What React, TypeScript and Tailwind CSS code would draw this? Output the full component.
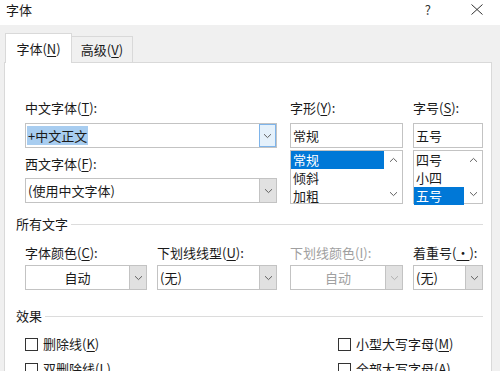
import React from "react";

function Chevron({ dir = "down", color = "#606060" }: { dir?: "down" | "up"; color?: string }) {
  return (
    <svg width="9" height="6" viewBox="0 0 9 6" fill="none">
      {dir === "down" ? (
        <path d="M1 1.2 L4.5 4.6 L8 1.2" stroke={color} strokeWidth="1" />
      ) : (
        <path d="M1 4.8 L4.5 1.4 L8 4.8" stroke={color} strokeWidth="1" />
      )}
    </svg>
  );
}

function Label({ text, k, disabled }: { text: string; k: string; disabled?: boolean }) {
  return (
    <div className={`h-[20px] leading-[20px] whitespace-nowrap ${disabled ? "text-[#a0a0a0]" : "text-[#1a1a1a]"}`}>
      {text}(<span className="underline underline-offset-2">{k}</span>):
    </div>
  );
}

function Combo({
  value,
  center,
  focused,
  disabled,
  highlight,
}: {
  value: string;
  center?: boolean;
  focused?: boolean;
  disabled?: boolean;
  highlight?: boolean;
}) {
  return (
    <div className="flex h-[25px] border border-[#c3c3c3] bg-white">
      <div className={`flex-1 flex items-center px-[1px] ${center ? "justify-center" : ""} ${disabled ? "text-[#a0a0a0]" : "text-[#1a1a1a]"}`}>
        {highlight ? (
          <span className="bg-[#a8cdf0] leading-[19px] px-[1px]">{value}</span>
        ) : (
          <span className="px-[1px]">{value}</span>
        )}
      </div>
      <div
        className={`w-[17px] flex items-center justify-center border-l ${
          focused ? "bg-[#e5f1fb] border-[#7eb4ea] border" : "bg-[#e1e1e1] border-[#c3c3c3]"
        }`}
      >
        <Chevron color={disabled ? "#b0b0b0" : "#606060"} />
      </div>
    </div>
  );
}

function ListBox({ items, selected }: { items: string[]; selected: number }) {
  return (
    <div className="flex h-[54px] border border-[#c3c3c3] bg-white">
      <div className="flex-1 flex flex-col">
        {items.map((it, i) => (
          <div
            key={it}
            className={`h-[18px] leading-[18px] px-[2px] ${i === selected ? "bg-[#0078d7] text-white" : "text-[#1a1a1a]"}`}
          >
            {it}
          </div>
        ))}
      </div>
      <div className="w-[18px] flex flex-col items-center justify-between py-[6px] bg-white">
        <Chevron dir="up" />
        <Chevron />
      </div>
    </div>
  );
}

function Section({ title }: { title: string }) {
  return (
    <div className="flex items-center h-[20px] ml-[11px] mr-[8px]">
      <span className="text-[#1a1a1a] whitespace-nowrap">{title}</span>
      <div className="flex-1 h-px bg-[#dcdcdc] ml-[3px]" />
    </div>
  );
}

function Check({ text, k }: { text: string; k: string }) {
  return (
    <div className="flex items-center h-[20px]">
      <div className="w-[13px] h-[13px] border border-[#333333] bg-white" />
      <span className="ml-[5px] text-[#1a1a1a] whitespace-nowrap">
        {text}(<span className="underline underline-offset-2">{k}</span>)
      </span>
    </div>
  );
}

export default function App() {
  return (
    <div className="w-[500px] h-[371px] overflow-hidden bg-[#f0f0f0] text-[13px] font-['Microsoft_YaHei','Noto_Sans_CJK_SC',sans-serif]">
      {/* Title bar */}
      <div className="h-[25px] bg-white flex items-start">
        <span className="ml-[6px] leading-[19px] text-[#1a1a1a]">字体</span>
        <div className="flex-1" />
        <span className="leading-[19px] text-[#333]">?</span>
        <div className="ml-[40px] mr-[17px] mt-[4px]">
          <svg width="12" height="11" viewBox="0 0 12 11">
            <path d="M0.5 0.5 L11.5 10.5 M11.5 0.5 L0.5 10.5" stroke="#333" strokeWidth="1" />
          </svg>
        </div>
      </div>

      {/* Tabs */}
      <div className="h-[37px] flex items-end pl-[5px]">
        <div className="h-[30px] w-[67px] bg-white border border-b-0 border-[#d9d9d9] flex items-center justify-center text-[#1a1a1a] relative top-[1px]">
          字体(<span className="underline underline-offset-2">N</span>)
        </div>
        <div className="h-[26px] w-[61px] border border-l-0 border-b-0 border-[#d9d9d9] flex items-center justify-center text-[#1a1a1a]">
          高级(<span className="underline underline-offset-2">V</span>)
        </div>
      </div>

      {/* Panel */}
      <div className="ml-[4px] mr-[8px] h-[320px] bg-white border border-[#d9d9d9] pt-[35px]">
        {/* Font row */}
        <div className="flex pl-[20px]">
          <div className="w-[252px]">
            <Label text="中文字体" k="T" />
            <div className="mt-[5px]">
              <Combo value="+中文正文" focused highlight />
            </div>
            <div className="mt-[6px]">
              <Label text="西文字体" k="F" />
            </div>
            <div className="mt-[4px]">
              <Combo value="(使用中文字体)" />
            </div>
          </div>
          <div className="w-[113px] ml-[13px]">
            <Label text="字形" k="Y" />
            <div className="mt-[5px] h-[25px] border border-[#c3c3c3] flex items-center px-[2px] text-[#1a1a1a]">常规</div>
            <div className="mt-[2px]">
              <ListBox items={["常规", "倾斜", "加粗"]} selected={0} />
            </div>
          </div>
          <div className="w-[70px] ml-[10px]">
            <Label text="字号" k="S" />
            <div className="mt-[5px] h-[25px] border border-[#c3c3c3] flex items-center px-[2px] text-[#1a1a1a]">五号</div>
            <div className="mt-[2px]">
              <ListBox items={["四号", "小四", "五号"]} selected={2} />
            </div>
          </div>
        </div>

        {/* All text */}
        <div className="mt-[10px]">
          <Section title="所有文字" />
        </div>
        <div className="flex pl-[20px] mt-[9px]">
          <div className="w-[122px]">
            <Label text="字体颜色" k="C" />
            <div className="mt-[2px]">
              <Combo value="自动" center />
            </div>
          </div>
          <div className="w-[120px] ml-[10px]">
            <Label text="下划线线型" k="U" />
            <div className="mt-[2px]">
              <Combo value="(无)" />
            </div>
          </div>
          <div className="w-[113px] ml-[13px]">
            <Label text="下划线颜色" k="I" disabled />
            <div className="mt-[2px]">
              <Combo value="自动" center disabled />
            </div>
          </div>
          <div className="w-[70px] ml-[10px]">
            <div className="h-[20px] leading-[20px] text-[#1a1a1a] whitespace-nowrap">
              着重号(<span className="underline underline-offset-2">·</span>):
            </div>
            <div className="mt-[2px]">
              <Combo value="(无)" />
            </div>
          </div>
        </div>

        {/* Effects */}
        <div className="mt-[16px]">
          <Section title="效果" />
        </div>
        <div className="grid grid-cols-[313px_1fr] pl-[20px] mt-[8px] gap-y-[5px]">
          <Check text="删除线" k="K" />
          <Check text="小型大写字母" k="M" />
          <Check text="双删除线" k="L" />
          <Check text="全部大写字母" k="A" />
        </div>
      </div>
    </div>
  );
}
